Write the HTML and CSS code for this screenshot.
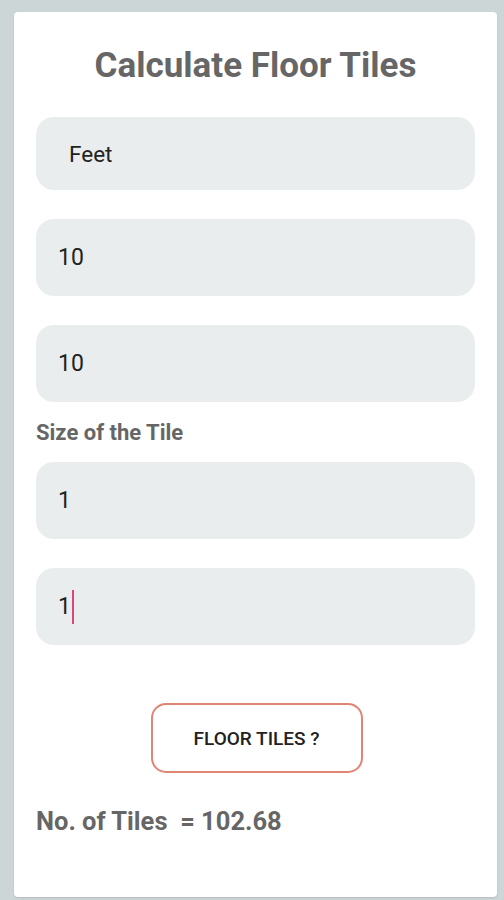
FILE: index.html
```html
<!DOCTYPE html>
<html>
<head>
<meta charset="utf-8">
<link rel="stylesheet" href="styles.css">
</head>
<body>
<div class="card">
  <h1 class="title">Calculate Floor Tiles</h1>
  <div class="field field-first"><span class="unit">Feet</span></div>
  <div class="field"><span class="val">10</span></div>
  <div class="field"><span class="val">10</span></div>
  <div class="label">Size of the Tile</div>
  <div class="field field-after-label"><span class="val">1</span></div>
  <div class="field"><span class="val">1</span><span class="caret"></span></div>
  <div class="btn-row"><button class="btn">FLOOR TILES ?</button></div>
  <div class="result">No. of Tiles&nbsp; = 102.68</div>
</div>
</body>
</html>
```
FILE: styles.css
```css
html, body {
  margin: 0;
  padding: 0;
}
body {
  background: #cdd6d6;
  width: 504px;
  height: 900px;
  padding: 12px 7px 3px 14px;
  box-sizing: border-box;
  font-family: Roboto, "Noto Sans", sans-serif;
}
.card {
  background: #fff;
  border-radius: 4px;
  height: 885px;
  box-sizing: border-box;
  padding: 35px 22px 0 22px;
  display: flex;
  flex-direction: column;
  box-shadow: 0 1px 2px rgba(0,0,0,0.12);
}
.title {
  margin: 0;
  text-align: center;
  font-size: 35px;
  font-weight: 700;
  color: #666;
  line-height: 38px;
  height: 38px;
}
.field {
  background: #e9eded;
  border-radius: 18px;
  height: 77px;
  margin-top: 29px;
  display: flex;
  align-items: center;
  padding-left: 22px;
  font-size: 23px;
  color: #222;
}
.field-first {
  height: 73px;
  margin-top: 32px;
  padding-left: 33px;
  font-size: 22.5px;
}
.field-after-label {
  margin-top: 18px;
}
.caret {
  display: inline-block;
  width: 2px;
  height: 34px;
  background: #e0457b;
  margin-left: 1px;
}
.label {
  margin-top: 20px;
  font-size: 22px;
  font-weight: 700;
  color: #666;
  line-height: 22px;
}
.btn-row {
  display: flex;
  justify-content: center;
  margin-top: 58px;
}
.btn {
  width: 212px;
  height: 70px;
  border: 2px solid #e08474;
  border-radius: 15px;
  background: #fff;
  font-family: Roboto, sans-serif;
  font-size: 19px;
  font-weight: 500;
  color: #222;
  margin-left: 2px;
  padding: 0;
}
.result {
  margin-top: 34px;
  font-size: 25.5px;
  font-weight: 700;
  color: #666;
  line-height: 28px;
}
```
